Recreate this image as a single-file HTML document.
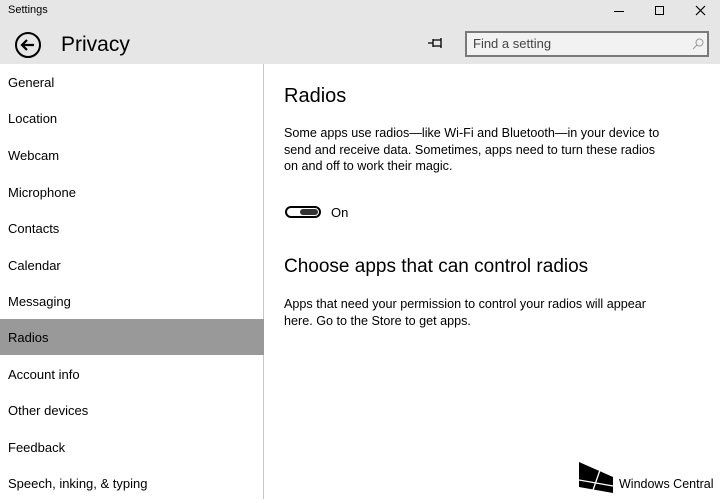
<!DOCTYPE html>
<html><head><meta charset="utf-8"><style>
*{margin:0;padding:0;box-sizing:border-box}
body{width:720px;height:499px;overflow:hidden;background:#fff;font-family:"Liberation Sans",sans-serif;color:#000;position:relative}
.hdr{position:absolute;left:0;top:0;width:720px;height:64px;background:#e6e6e6}
.t{position:absolute;font-size:13px}
.side{position:absolute;left:0;top:64px;width:264px;height:435px;border-right:1px solid #c8c8c8}
.item{position:absolute;left:0;width:264px;height:36px;line-height:38px;padding-left:8px;font-size:13px}
.sel{background:#999}
p{font-size:12.6px;line-height:16.5px}
</style></head><body>
<div class="hdr">
 <div class="t" style="left:8px;top:4px;font-size:11px">Settings</div>
 <svg style="position:absolute;left:14px;top:31px" width="28" height="28" viewBox="0 0 28 28"><circle cx="14" cy="14" r="12" fill="none" stroke="#000" stroke-width="2"/><path d="M20 14H8M13 9l-5 5 5 5" fill="none" stroke="#000" stroke-width="2.2"/></svg>
 <div class="t" style="left:61px;top:33px;font-size:21px">Privacy</div>
 <div style="position:absolute;left:614px;top:11px;width:10px;height:1px;background:#000"></div>
 <div style="position:absolute;left:655px;top:6px;width:9px;height:9px;border:1px solid #000"></div>
 <svg style="position:absolute;left:695px;top:5px" width="11" height="11"><path d="M1 1L10 10M10 1L1 10" stroke="#000" stroke-width="1.2"/></svg>
 <svg style="position:absolute;left:427px;top:37px" width="18" height="12"><path d="M1 6H6M6 2V10M6 3H14V9H6M14 1V11" stroke="#000" stroke-width="1.3" fill="none"/></svg>
 <div style="position:absolute;left:465px;top:31px;width:244px;height:26px;border:2px solid #7a7a7a;background:#f2f2f2"></div>
 <div class="t" style="left:473px;top:36px;color:#444">Find a setting</div>
 <svg style="position:absolute;left:692px;top:38px" width="12" height="12"><circle cx="7.5" cy="4.5" r="3.5" fill="none" stroke="#999"/><path d="M5 7L1 11" stroke="#999"/></svg>
</div>
<div class="side">
 <div class="item" style="top:0">General</div>
 <div class="item" style="top:36px">Location</div>
 <div class="item" style="top:73px">Webcam</div>
 <div class="item" style="top:110px">Microphone</div>
 <div class="item" style="top:146px">Contacts</div>
 <div class="item" style="top:183px">Calendar</div>
 <div class="item" style="top:219px">Messaging</div>
 <div class="item sel" style="top:255px">Radios</div>
 <div class="item" style="top:292px">Account info</div>
 <div class="item" style="top:328px">Other devices</div>
 <div class="item" style="top:365px">Feedback</div>
 <div class="item" style="top:401px">Speech, inking, &amp; typing</div>
</div>
<div class="t" style="left:284px;top:85px;font-size:20px">Radios</div>
<p style="position:absolute;left:284px;top:125px;width:385px">Some apps use radios—like Wi-Fi and Bluetooth—in your device to send and receive data. Sometimes, apps need to turn these radios on and off to work their magic.</p>
<div style="position:absolute;left:285px;top:206px;width:36px;height:12px;border:2px solid #000;border-radius:6px"></div>
<div style="position:absolute;left:300px;top:209px;width:18px;height:6px;background:#333;border-radius:3px"></div>
<div class="t" style="left:331px;top:205px">On</div>
<div class="t" style="left:284px;top:256px;font-size:19px">Choose apps that can control radios</div>
<p style="position:absolute;left:284px;top:296px;width:375px">Apps that need your permission to control your radios will appear here. Go to the Store to get apps.</p>
<svg style="position:absolute;left:579px;top:462px" width="35" height="32" viewBox="0 0 35 32"><path d="M0 0L34 15V31L0 25Z" fill="#000"/><path d="M21 8L13 31M0 18L34 24" stroke="#fff" stroke-width="1.3"/></svg>
<div class="t" style="left:619px;top:477px;font-size:12.5px">Windows Central</div>
</body></html>
